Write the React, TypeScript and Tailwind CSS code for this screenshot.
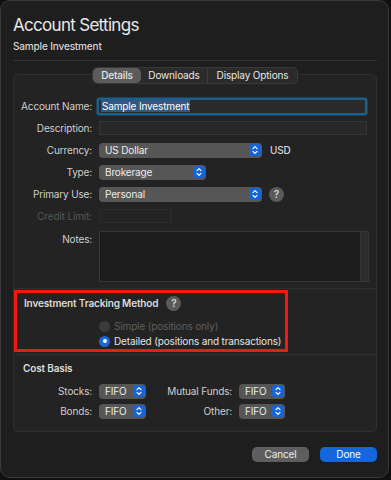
import React from "react";

function Stepper() {
  return (
    <span className="flex h-[12px] w-[12px] items-center justify-center rounded-[3px] bg-[#1565d8]">
      <svg width="12" height="12" viewBox="0 0 12 12" fill="none" stroke="#fff" strokeWidth={1.2} strokeLinecap="round" strokeLinejoin="round">
        <path d="M4 4.6 6 2.6 8 4.6" />
        <path d="M4 7.4 6 9.4 8 7.4" />
      </svg>
    </span>
  );
}

function Popup({ value, width }: { value: string; width: string }) {
  return (
    <div className={`flex h-[15px] items-center justify-between rounded-[4px] bg-[#565656] pl-[6px] pr-[1.5px] text-[10px] text-[#ececec] ${width}`}>
      <span>{value}</span>
      <Stepper />
    </div>
  );
}

function Help() {
  return (
    <span className="flex h-[15px] w-[15px] items-center justify-center rounded-full bg-[#5a5a5a] text-[10px] font-semibold text-[#d8d8d8]">
      ?
    </span>
  );
}

function Row({ label, children, muted }: { label: string; children: React.ReactNode; muted?: boolean }) {
  return (
    <div className="flex h-[22px] items-center gap-[7px]">
      <span className={`w-[78px] text-right text-[10px] ${muted ? "text-[#565656]" : "text-[#cfcfcf]"}`}>{label}</span>
      {children}
    </div>
  );
}

export default function App() {
  return (
    <div className="min-h-screen whitespace-nowrap bg-[#101010] font-['Inter',sans-serif] tracking-[-0.15px]">
      <div className="h-[478px] w-[389px] rounded-[10px] border border-[#3a3a3a] bg-[#1e1e1e] pl-[12px] pr-[11px] pt-[10px]">
        <h1 className="h-[28px] text-[17px] leading-[28px] tracking-[-0.7px] text-[#e8e8e8]">Account Settings</h1>
        <p className="h-[14px] text-[10px] font-medium leading-[14px] text-[#d6d6d6]">Sample Investment</p>
        <div className="mt-[7px] h-px bg-[#333333]" />

        {/* tabs */}
        <div className="relative z-10 mt-[6px] flex justify-center">
          <div className="flex h-[17px] items-center rounded-[5px] border border-[#383838] bg-[#2b2b2b] text-[10px] text-[#e6e6e6]">
            <span className="flex h-full w-[48px] items-center justify-center rounded-[5px] bg-[#5c5c5c] font-medium">Details</span>
            <span className="flex h-full w-[67px] items-center justify-center border-r border-[#3c3c3c]">Downloads</span>
            <span className="flex h-full w-[89px] items-center justify-center">Display Options</span>
          </div>
        </div>

        <div className="-mt-[10px] rounded-[5px] border border-[#2f2f2f] bg-[#232323] pb-[10px] pt-[20px]">
          <Row label="Account Name:">
            <div className="flex h-[13px] w-[266px] items-center rounded-[1px] bg-[#2a2a2a] pl-[2px] text-[10px] text-white ring-[2.5px] ring-[#19608f]">
              <span className="bg-[#32587f] px-[1px] leading-[12px]">Sample Investment</span>
            </div>
          </Row>
          <Row label="Description:">
            <div className="h-[14px] w-[268px] border border-[#353535] bg-[#282828]" />
          </Row>
          <Row label="Currency:">
            <Popup value="US Dollar" width="w-[163px]" />
            <span className="ml-px text-[10px] font-medium text-[#d6d6d6]">USD</span>
          </Row>
          <Row label="Type:">
            <Popup value="Brokerage" width="w-[107px]" />
          </Row>
          <Row label="Primary Use:">
            <Popup value="Personal" width="w-[163px]" />
            <Help />
          </Row>
          <Row label="Credit Limit:" muted>
            <div className="h-[14px] w-[73px] border border-[#2b2b2b] bg-[#242424]" />
          </Row>
          <div className="mt-[4px] flex gap-[7px]">
            <span className="w-[78px] pt-[1px] text-right text-[10px] text-[#cfcfcf]">Notes:</span>
            <div className="flex h-[51px] w-[270px] border border-[#363636] bg-[#1d1d1d]">
              <div className="flex-1" />
              <div className="w-[8px] border-l border-[#333333] bg-[#2c2c2c]" />
            </div>
          </div>
          <div className="mt-[6px] h-px bg-[#2f2f2f]" />

          <div className="mt-px h-[62px] w-[274px] border-[3px] border-[#f21818]">
            <div className="flex h-[20px] items-center gap-[8px] pl-[7px]">
              <span className="text-[10px] font-semibold text-[#dcdcdc]">Investment Tracking Method</span>
              <Help />
            </div>
            <div className="mt-[5.5px] flex h-[15px] items-center gap-[4px] pl-[82px]">
              <span className="h-[11px] w-[11px] rounded-full bg-[#3b3b3b]" />
              <span className="text-[10px] text-[#5e5e5e]">Simple (positions only)</span>
            </div>
            <div className="flex h-[15px] items-center gap-[4px] pl-[82px]">
              <span className="flex h-[11px] w-[11px] items-center justify-center rounded-full bg-[#1a69dc]">
                <span className="h-[4px] w-[4px] rounded-full bg-white" />
              </span>
              <span className="text-[10px] text-[#e4e4e4]">Detailed (positions and transactions)</span>
            </div>
          </div>
          <div className="mt-[2px] h-px bg-[#2f2f2f]" />

          <div className="mt-[3px] flex h-[20px] items-center pl-[9px] text-[10px] font-semibold text-[#dcdcdc]">Cost Basis</div>
          <div className="mt-[3px] flex h-[20px] items-center">
            <span className="w-[78px] text-right text-[10px] text-[#cfcfcf]">Stocks:</span>
            <span className="ml-[7px]"><Popup value="FIFO" width="w-[47px]" /></span>
            <span className="w-[86px] text-right text-[10px] text-[#cfcfcf]">Mutual Funds:</span>
            <span className="ml-[7px]"><Popup value="FIFO" width="w-[46px]" /></span>
          </div>
          <div className="flex h-[20px] items-center">
            <span className="w-[78px] text-right text-[10px] text-[#cfcfcf]">Bonds:</span>
            <span className="ml-[7px]"><Popup value="FIFO" width="w-[47px]" /></span>
            <span className="w-[86px] text-right text-[10px] text-[#cfcfcf]">Other:</span>
            <span className="ml-[7px]"><Popup value="FIFO" width="w-[46px]" /></span>
          </div>
        </div>

        <div className="mt-[15px] flex justify-end gap-[11px]">
          <button className="h-[15px] w-[57px] rounded-[5px] bg-[#5e5e5e] text-[10px] text-[#ececec]">Cancel</button>
          <button className="h-[15px] w-[57px] rounded-[5px] bg-[#1466dc] text-[10px] text-white">Done</button>
        </div>
      </div>
    </div>
  );
}
